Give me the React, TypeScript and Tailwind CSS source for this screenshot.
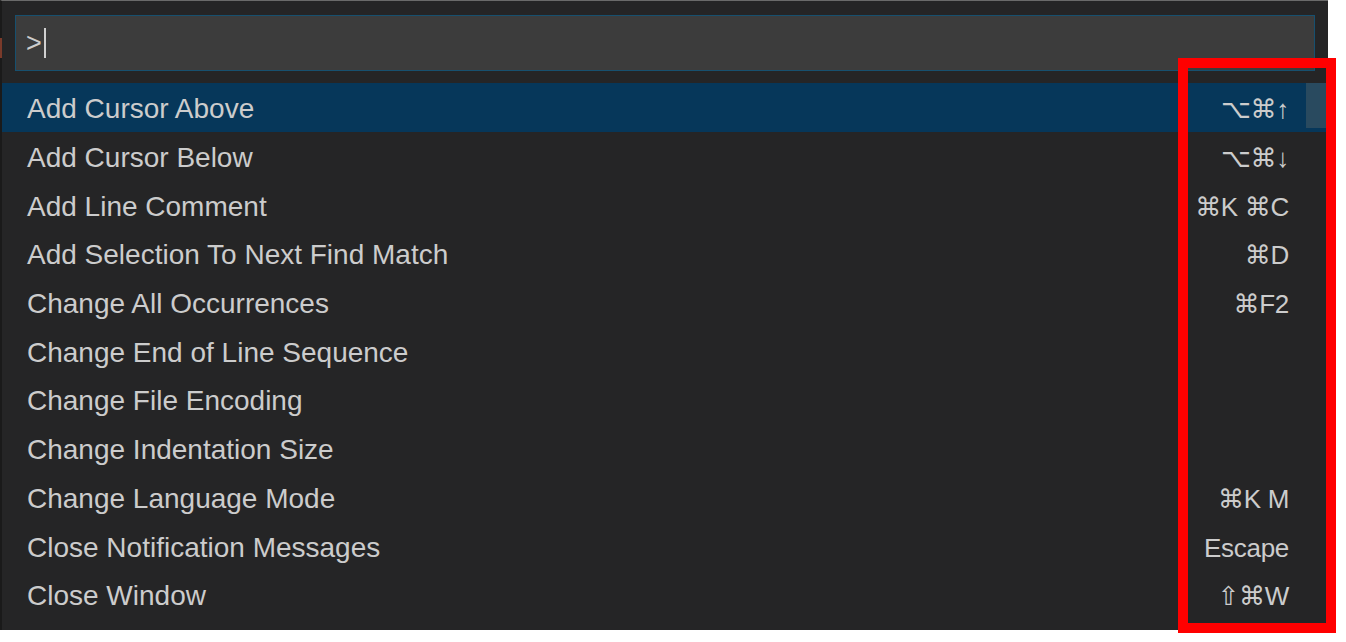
import React from "react";

const commands: { label: string; keys?: string }[] = [
  { label: "Add Cursor Above", keys: "⌥⌘↑" },
  { label: "Add Cursor Below", keys: "⌥⌘↓" },
  { label: "Add Line Comment", keys: "⌘K ⌘C" },
  { label: "Add Selection To Next Find Match", keys: "⌘D" },
  { label: "Change All Occurrences", keys: "⌘F2" },
  { label: "Change End of Line Sequence" },
  { label: "Change File Encoding" },
  { label: "Change Indentation Size" },
  { label: "Change Language Mode", keys: "⌘K M" },
  { label: "Close Notification Messages", keys: "Escape" },
  { label: "Close Window", keys: "⇧⌘W" },
];

const App: React.FC = () => {
  return (
    <div
      className="relative w-[1346px] h-[642px] bg-white overflow-hidden"
      style={{ fontFamily: '"Liberation Sans", Arial, "DejaVu Sans", sans-serif' }}
    >
      <div className="relative w-[1328px] h-[630px] bg-[#252526] border-t border-[#6a6a6a] border-l-[2px] border-l-[#1a1a1a]">
        {/* little red tab on the left edge */}
        <div className="absolute left-[-2px] top-[37px] w-[2px] h-[20px] bg-[#7a3a2a]" />

        <div className="pl-[13px] pr-[13px] pt-[14px]">
          <div className="flex items-center h-[56px] w-[1300px] bg-[#3c3c3c] border border-[#17506f] pl-[10px]">
            <span className="text-[27px] text-[#cccccc] leading-none">&gt;</span>
            <span className="ml-[2px] w-[2px] h-[30px] bg-[#d0d0d0]" />
          </div>
        </div>

        <div className="mt-[12px] relative">
          {commands.map((c, i) => (
            <div
              key={c.label}
              className={
                "flex items-center justify-between h-[48.7px] pt-[4px] pl-[25px] pr-[39px] text-[#cccccc] " +
                (i === 0 ? "bg-[#06375a]" : "")
              }
            >
              <span className="text-[28px] leading-none">{c.label}</span>
              {c.keys && (
                <span className="text-[26px] leading-none tracking-[-0.3px]">{c.keys}</span>
              )}
            </div>
          ))}
          {/* scrollbar thumb */}
          <div className="absolute right-0 top-0 w-[22px] h-[45px] bg-[#294a5f]" />
        </div>
      </div>

      {/* red annotation box */}
      <div className="absolute left-[1178px] top-[58px] w-[158px] h-[575px] border-[10px] border-[#ff0000]" />
    </div>
  );
};

export default App;
